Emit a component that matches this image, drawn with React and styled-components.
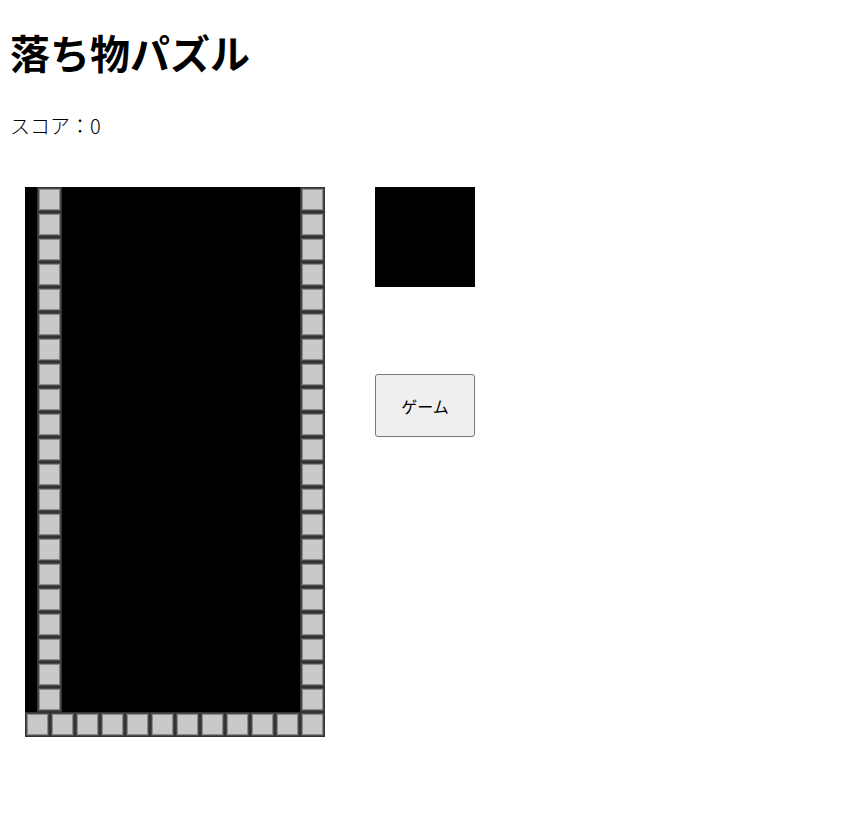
import React from "react";
import styled, { createGlobalStyle } from "styled-components";

const ROWS = 21;
const COLS = 12;

const GlobalStyle = createGlobalStyle`
  body {
    margin: 0;
    background: #fff;
    color: #000;
    font-family: "Noto Sans CJK JP", "Noto Sans", sans-serif;
  }
`;

const Page = styled.div`
  padding: 0 0 40px 10px;
`;

const Title = styled.h1`
  margin: 0;
  padding-top: 26px;
  font-size: 40px;
  line-height: 52px;
  font-weight: 700;
`;

const Score = styled.p`
  margin: 34px 0 0;
  font-size: 20px;
  line-height: 28px;
  font-weight: 300;
`;

const Game = styled.div`
  display: flex;
  gap: 50px;
  margin: 47px 0 0 15px;
`;

const Board = styled.div`
  display: flex;
  flex-direction: column;
  width: 300px;
  background: #000;
`;

const WallRow = styled.div`
  display: flex;
  justify-content: space-between;
  padding-left: 12px;
`;

const FloorRow = styled.div`
  display: flex;
`;

const Cell = styled.div`
  box-sizing: border-box;
  width: 25px;
  height: 25px;
  background: #c9c9c9;
  border: 1px solid #333;
  box-shadow: inset 0 0 0 1px #4a4a4a, inset 0 0 0 2px #8a8a8a;
`;

const Side = styled.div`
  display: flex;
  flex-direction: column;
  align-items: flex-start;
`;

const Preview = styled.div`
  width: 100px;
  height: 100px;
  background: #000;
`;

const Button = styled.button`
  box-sizing: border-box;
  margin-top: 87px;
  width: 100px;
  height: 63px;
  background: #efefef;
  border: 1px solid #767676;
  border-radius: 3px;
  font-family: "Noto Sans CJK JP", "Noto Sans", sans-serif;
  font-size: 16px;
  color: #000;
  cursor: pointer;
`;

export default function App() {
  return (
    <Page>
      <GlobalStyle />
      <Title>落ち物パズル</Title>
      <Score>スコア：0</Score>
      <Game>
        <Board>
          {Array.from({ length: ROWS }).map((_, r) => (
            <WallRow key={r}>
              <Cell />
              <Cell />
            </WallRow>
          ))}
          <FloorRow>
            {Array.from({ length: COLS }).map((_, c) => (
              <Cell key={c} />
            ))}
          </FloorRow>
        </Board>
        <Side>
          <Preview />
          <Button>ゲーム</Button>
        </Side>
      </Game>
    </Page>
  );
}
